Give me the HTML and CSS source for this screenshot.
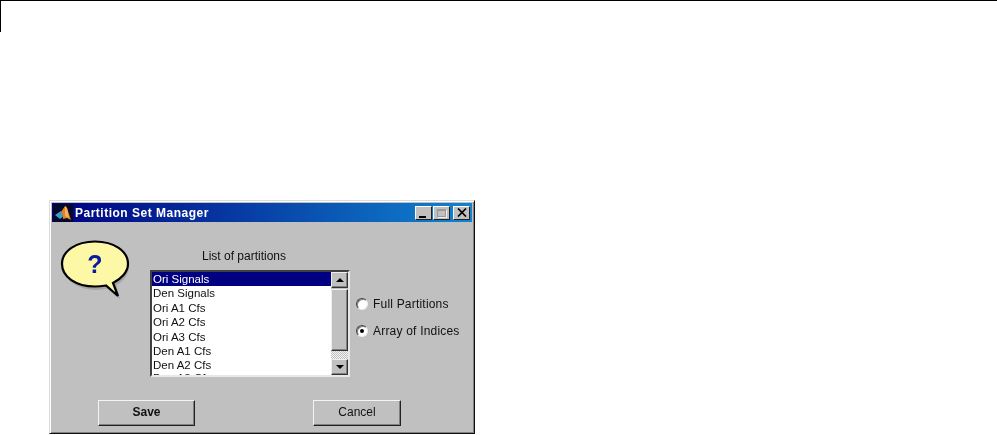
FILE: index.html
```html
<!DOCTYPE html>
<html lang="en">
<head>
  <meta charset="UTF-8">
  <title>Partition Set Manager</title>
  <link rel="stylesheet" href="styles.css">
</head>
<body>
  <div class="page-rule"></div>

  <div class="window">
    <div class="titlebar">
      <svg class="app-icon" width="20" height="18" viewBox="0 0 20 18">
        <rect width="20" height="18" fill="#04082c"/>
        <path d="M2 11 L8 7 L11 12 L7 15 Z" fill="#3f9cc4"/>
        <path d="M8 8 L12 2 L14 4 L18 16 L14 14 L10 15 L10 11 Z" fill="#e8801f"/>
        <path d="M12 2 L14 4 L16 14 L12 12 Z" fill="#f4b060"/>
      </svg>
      <span class="title-text">Partition Set Manager</span>
      <div class="title-buttons">
        <div class="title-btn"><span class="glyph-min"></span></div>
        <div class="title-btn"><span class="glyph-max"></span></div>
        <div class="title-btn close">
          <svg width="10" height="9" viewBox="0 0 10 9"><path d="M1 0.5 L9 8.5 M9 0.5 L1 8.5" stroke="#000" stroke-width="1.7" fill="none"/></svg>
        </div>
      </div>
    </div>

    <div class="content">
      <div class="main-row">
        <svg class="bubble" width="70" height="60" viewBox="0 0 70 60">
          <ellipse cx="36" cy="27" rx="33" ry="23" fill="#8c8c8c" opacity="0.55"/>
          <path d="M46 48 L60 59 L56 44 Z" fill="#8c8c8c" opacity="0.55"/>
          <path d="M35 1.5 C16 1.5 2 11 2 24 C2 37 16 46.5 35 46.5 C39 46.5 43 46 46 45.5 L58 56 L53 43 C61 39 68 32 68 24 C68 11 54 1.5 35 1.5 Z" fill="#fdf8a6" stroke="#000" stroke-width="2.2"/>
          <text x="35" y="33" class="bubble-mark">?</text>
        </svg>

        <div class="list-col">
          <div class="list-label">List of partitions</div>
          <div class="listbox">
            <ul class="list-items">
              <li class="selected">Ori Signals</li>
              <li>Den Signals</li>
              <li>Ori A1 Cfs</li>
              <li>Ori A2 Cfs</li>
              <li>Ori A3 Cfs</li>
              <li>Den A1 Cfs</li>
              <li>Den A2 Cfs</li>
              <li>Den A3 Cfs</li>
            </ul>
            <div class="scrollbar">
              <div class="scroll-btn"><span class="arrow-up"></span></div>
              <div class="scroll-thumb"></div>
              <div class="scroll-track"></div>
              <div class="scroll-btn"><span class="arrow-down"></span></div>
            </div>
          </div>
        </div>

        <div class="radio-col">
          <div class="radio-row"><span class="radio"></span>Full Partitions</div>
          <div class="radio-row"><span class="radio checked"></span>Array of Indices</div>
        </div>
      </div>

      <div class="button-row">
        <div class="button save">Save</div>
        <div class="button cancel">Cancel</div>
      </div>
    </div>
  </div>
</body>
</html>
```

FILE: styles.css
```css
body {
  margin: 0;
  background-color: #fff;
  font-family: "Liberation Sans", Arial, sans-serif;
  font-size: 12px;
  color: #111;
  overflow: hidden;
}

.page-rule {
  height: 32px;
  border-top: 1px solid #000;
  border-left: 1px solid #000;
  box-sizing: border-box;
}

.window {
  margin: 168px 0 0 49px;
  width: 426px;
  height: 234px;
  box-sizing: border-box;
  padding: 2px;
  background-color: #c0c0c0;
  border: 1px solid;
  border-color: #dcdcdc #111 #111 #dcdcdc;
  box-shadow: inset 1px 1px 0 #fff, inset -1px -1px 0 #808080;
  filter: blur(0.35px);
}

.titlebar {
  display: flex;
  align-items: center;
  height: 19px;
  background: linear-gradient(to right, #000080, #1084d0);
}

.app-icon {
  margin-left: 1px;
}

.title-text {
  margin-left: 2px;
  color: #fff;
  font-size: 12px;
  font-weight: bold;
  letter-spacing: 0.5px;
}

.title-buttons {
  display: flex;
  margin-left: auto;
  margin-right: 2px;
}

.title-btn {
  display: flex;
  align-items: center;
  justify-content: center;
  width: 17px;
  height: 14px;
  margin-left: 1px;
  box-sizing: border-box;
  background-color: #c0c0c0;
  border: 1px solid;
  border-color: #fff #222 #222 #fff;
}

.title-btn.close {
  margin-left: 3px;
}

.glyph-min {
  align-self: flex-end;
  width: 7px;
  height: 2px;
  margin: 0 3px 1px 0;
  background-color: #000;
}

.glyph-max {
  width: 9px;
  height: 8px;
  box-sizing: border-box;
  border: 1px solid #9a9a9a;
  border-top-width: 2px;
  box-shadow: 1px 1px 0 #eee;
}

.content {
  display: flex;
  flex-direction: column;
}

.main-row {
  display: flex;
  height: 155px;
  padding: 18px 0 0 8px;
  box-sizing: border-box;
}

.bubble {
  flex: none;
}

.bubble-mark {
  font-family: "Liberation Sans", Arial, sans-serif;
  font-size: 25px;
  font-weight: bold;
  fill: #0a1aa0;
  text-anchor: middle;
}

.list-col {
  width: 200px;
  margin-left: 20px;
  padding-top: 9px;
}

.list-label {
  height: 14px;
  line-height: 14px;
  margin-bottom: 7px;
  margin-right: 12px;
  text-align: center;
}

.listbox {
  display: flex;
  width: 200px;
  height: 107px;
  box-sizing: border-box;
  background-color: #fff;
  border: 2px solid;
  border-color: #404040 #e8e8e8 #e8e8e8 #404040;
  overflow: hidden;
}

.list-items {
  flex: 1;
  margin: 0;
  padding: 0;
  list-style: none;
  font-size: 11.5px;
  overflow: hidden;
}

.list-items li {
  height: 14.4px;
  line-height: 14.4px;
  padding-left: 1px;
}

.list-items li:last-child {
  line-height: 10px;
}

.list-items li.selected {
  background-color: #000080;
  color: #fff;
}

.scrollbar {
  display: flex;
  flex-direction: column;
  width: 17px;
  background-color: #c0c0c0;
}

.scroll-btn {
  display: flex;
  flex: none;
  align-items: center;
  justify-content: center;
  height: 16px;
  box-sizing: border-box;
  border: 1px solid;
  border-color: #eee #333 #333 #eee;
  box-shadow: inset -1px -1px 0 #808080;
}

.scroll-thumb {
  flex: none;
  height: 62px;
  margin-top: 1px;
  box-sizing: border-box;
  border: 1px solid;
  border-color: #eee #333 #333 #eee;
  box-shadow: inset -1px -1px 0 #808080;
}

.scroll-track {
  flex: 1;
  background: repeating-conic-gradient(#f4f4f4 0 25%, #c0c0c0 0 50%) 0 0 / 2px 2px;
}

.arrow-up,
.arrow-down {
  width: 0;
  height: 0;
  border-left: 4px solid transparent;
  border-right: 4px solid transparent;
}

.arrow-up {
  border-bottom: 4px solid #000;
}

.arrow-down {
  border-top: 4px solid #000;
}

.radio-col {
  display: flex;
  flex-direction: column;
  gap: 14px;
  margin-left: 6px;
  padding-top: 57px;
}

.radio-row {
  display: flex;
  align-items: center;
  gap: 5px;
  height: 13px;
  letter-spacing: 0.2px;
  white-space: nowrap;
}

.radio {
  display: flex;
  align-items: center;
  justify-content: center;
  width: 12px;
  height: 12px;
  box-sizing: border-box;
  background-color: #fff;
  border-radius: 50%;
  border: 1px solid;
  border-color: #444 #eee #eee #444;
  box-shadow: inset 1px 1px 0 #808080;
}

.radio.checked::after {
  content: "";
  width: 4px;
  height: 4px;
  background-color: #000;
  border-radius: 50%;
}

.button-row {
  display: flex;
  gap: 118px;
  margin-top: 23px;
  padding-left: 46px;
}

.button {
  height: 26px;
  line-height: 23px;
  box-sizing: border-box;
  text-align: center;
  background-color: #c0c0c0;
  border: 1px solid;
  border-color: #f4f4f4 #222 #222 #f4f4f4;
  box-shadow: inset -1px -1px 0 #808080;
}

.button.save {
  width: 97px;
  font-weight: bold;
}

.button.cancel {
  width: 88px;
}
```
